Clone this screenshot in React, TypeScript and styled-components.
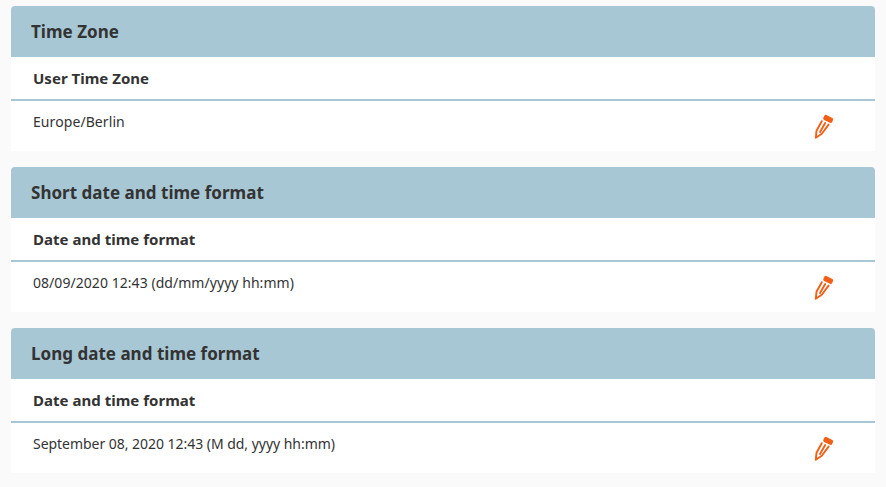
import React from "react";
import styled, { createGlobalStyle } from "styled-components";

const GlobalStyle = createGlobalStyle`
  * { box-sizing: border-box; }
  body {
    margin: 0;
    background: #fafafa;
    color: #333;
    font-family: "Noto Sans", sans-serif;
  }
`;

const Page = styled.main`
  display: flex;
  flex-direction: column;
  gap: 16px;
  padding: 6px 11px 14px;
`;

const Panel = styled.section`
  height: 145px;
  background: #fff;
  border-radius: 4px 4px 0 0;
  overflow: hidden;
`;

const PanelTitle = styled.h2`
  margin: 0;
  height: 51px;
  padding: 0 20px;
  background: #a8c7d4;
  font-size: 17px;
  line-height: 51px;
  font-weight: 700;
  letter-spacing: 0.02px;
`;

const ColumnHeading = styled.div`
  height: 44px;
  padding: 0 22px;
  border-bottom: 2px solid #a8c7d4;
  font-size: 15px;
  line-height: 43px;
  font-weight: 700;
  letter-spacing: 0.02px;
`;

const Row = styled.div`
  display: flex;
  justify-content: space-between;
  align-items: flex-start;
  padding: 0 41px 0 22px;
`;

const Value = styled.span<{ $tracking: number }>`
  font-size: 14px;
  line-height: 42px;
  letter-spacing: ${(p) => p.$tracking}px;
`;

const EditButton = styled.button`
  display: block;
  margin: 12px 0 0;
  padding: 0;
  border: 0;
  background: none;
  line-height: 0;
`;

const PencilIcon = () => (
  <svg width="21" height="27" viewBox="0 0 21 27" aria-hidden="true">
    <path d="M12.8 3.5 18.6 6.4 17.7 8.4 11.8 5.5Z" fill="#f26018" stroke="#f26018" strokeWidth="3.2" strokeLinejoin="round" />
    <g fill="none" stroke="#f26018" strokeWidth="1.9" strokeLinejoin="round" strokeLinecap="round">
      <path d="M8.8 8.2 3.5 17.8 2.8 24.8 8.8 20.8 15.6 11.6" />
      <path d="M12.2 10 7 19" />
    </g>
  </svg>
);

const settings = [
  { title: "Time Zone", heading: "User Time Zone", value: "Europe/Berlin", tracking: 0.08 },
  { title: "Short date and time format", heading: "Date and time format", value: "08/09/2020 12:43 (dd/mm/yyyy hh:mm)", tracking: 0.05 },
  { title: "Long date and time format", heading: "Date and time format", value: "September 08, 2020 12:43 (M dd, yyyy hh:mm)", tracking: -0.035 },
];

export default function App() {
  return (
    <>
      <GlobalStyle />
      <Page>
        {settings.map((s) => (
          <Panel key={s.title}>
            <PanelTitle>{s.title}</PanelTitle>
            <ColumnHeading>{s.heading}</ColumnHeading>
            <Row>
              <Value $tracking={s.tracking}>{s.value}</Value>
              <EditButton aria-label="Edit"><PencilIcon /></EditButton>
            </Row>
          </Panel>
        ))}
      </Page>
    </>
  );
}
